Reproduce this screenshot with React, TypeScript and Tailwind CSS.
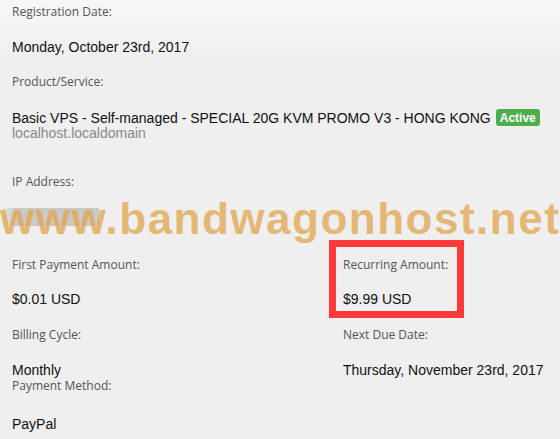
import React from "react";

const label = "text-[12px] leading-[16px] text-[#555] [font-family:'Open_Sans',sans-serif]";
const value = "text-[14px] leading-[16px] text-[#111] [font-family:'Liberation_Sans',Arial,sans-serif]";

export default function App() {
  return (
    <div className="relative w-[560px] h-[439px] overflow-hidden bg-gradient-to-b from-[#f7f7f7] to-[#efefef] to-[60px]">
      <div className="pl-[12px] pt-[4px]">
        <div className={`${label} h-[35px]`}>Registration Date:</div>
        <div className={`${value} h-[35px]`}>Monday, October 23rd, 2017</div>
        <div className={`${label} h-[35px]`}>Product/Service:</div>
        <div className="h-[65px]">
          <div className={`${value} flex items-center`}>
            <span>Basic VPS - Self-managed - SPECIAL 20G KVM PROMO V3 - HONG KONG</span>
            <span className="ml-[5px] inline-flex h-[17px] items-center rounded-[3px] bg-[#4cae4c] px-[4px] text-[12px] font-bold leading-none text-white">
              Active
            </span>
          </div>
          <div className="text-[14px] leading-[15px] text-[#888] [font-family:'Liberation_Sans',Arial,sans-serif]">
            localhost.localdomain
          </div>
        </div>
        <div className={`${label} h-[34px]`}>IP Address:</div>
        <div className="h-[18px] w-[96px] -ml-[9px] bg-gradient-to-r from-[#e4e4e4] to-[#c9c9c9] to-[15%]" />
        <div className="h-[31px]" />
        <div className="grid grid-cols-[331px_1fr]">
          <div>
            <div className={`${label} h-[34px]`}>First Payment Amount:</div>
            <div className={`${value} h-[36px]`}>$0.01 USD</div>
            <div className={`${label} h-[36px]`}>Billing Cycle:</div>
            <div className="h-[15px] text-[14px] leading-[15px] text-[#111] [font-family:'Liberation_Sans',Arial,sans-serif]">Monthly</div>
            <div className="h-[38px] text-[12px] leading-[15px] text-[#555] [font-family:'Open_Sans',sans-serif]">Payment Method:</div>
            <div className={value}>PayPal</div>
          </div>
          <div>
            <div className={`${label} h-[34px]`}>Recurring Amount:</div>
            <div className={`${value} h-[36px]`}>$9.99 USD</div>
            <div className={`${label} h-[35px]`}>Next Due Date:</div>
            <div className={value}>Thursday, November 23rd, 2017</div>
          </div>
        </div>
      </div>

      <div className="pointer-events-none absolute left-[329px] top-[240px] h-[78px] w-[135px] border-[7px] border-[#fc3a3a]" />

      <div className="pointer-events-none absolute left-0 top-[193px] whitespace-nowrap text-[44px] font-bold leading-[52px] tracking-[1.5px] text-[rgba(225,165,75,0.75)] [font-family:'Liberation_Sans',Arial,sans-serif]">
        www.bandwagonhost.net
      </div>
    </div>
  );
}
